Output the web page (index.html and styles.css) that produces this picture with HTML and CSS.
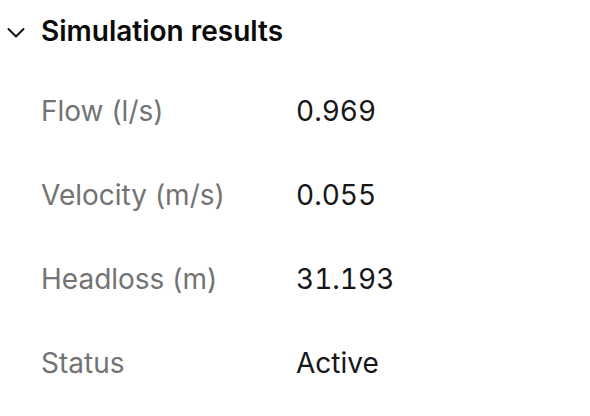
FILE: index.html
```html
<!DOCTYPE html>
<html lang="en">
<head>
<meta charset="utf-8">
<link rel="stylesheet" href="styles.css">
</head>
<body>
<section class="panel">
  <header class="panel-header">
    <svg class="chevron" viewBox="0 0 18 34" width="18" height="34" aria-hidden="true">
      <path d="M1.5 15 L9 22.5 L16.5 15" fill="none" stroke="#111" stroke-width="2" stroke-linecap="round" stroke-linejoin="round"/>
    </svg>
    <h2 class="panel-title">Simulation results</h2>
  </header>
  <dl class="results">
    <div class="row"><dt>Flow (l/s)</dt><dd>0.969</dd></div>
    <div class="row"><dt>Velocity (m/s)</dt><dd>0.055</dd></div>
    <div class="row"><dt>Headloss (m)</dt><dd>31.193</dd></div>
    <div class="row"><dt>Status</dt><dd>Active</dd></div>
  </dl>
</section>
</body>
</html>
```
FILE: styles.css
```css
html, body {
  margin: 0;
  padding: 0;
  background: #fff;
}

body {
  font-family: Inter, "Noto Sans", sans-serif;
  font-size: 28px;
  line-height: 34px;
  color: #171717;
}

.panel {
  padding: 14px 0 0 7px;
}

.panel-header {
  display: flex;
  align-items: center;
  gap: 16px;
  height: 34px;
}

.chevron {
  display: block;
  flex: none;
}

.panel-title {
  margin: 0;
  font-size: 28px;
  line-height: 34px;
  font-weight: 600;
  color: #0a0a0a;
}

.results {
  margin: 0;
  padding: 46px 0 0 34px;
  display: flex;
  flex-direction: column;
  gap: 50px;
}

.row {
  display: grid;
  grid-template-columns: 255px 1fr;
  height: 34px;
  align-items: center;
}

.row dt {
  color: #737373;
}

.row dd {
  margin: 0;
  color: #171717;
  font-variant-numeric: tabular-nums;
}
```
